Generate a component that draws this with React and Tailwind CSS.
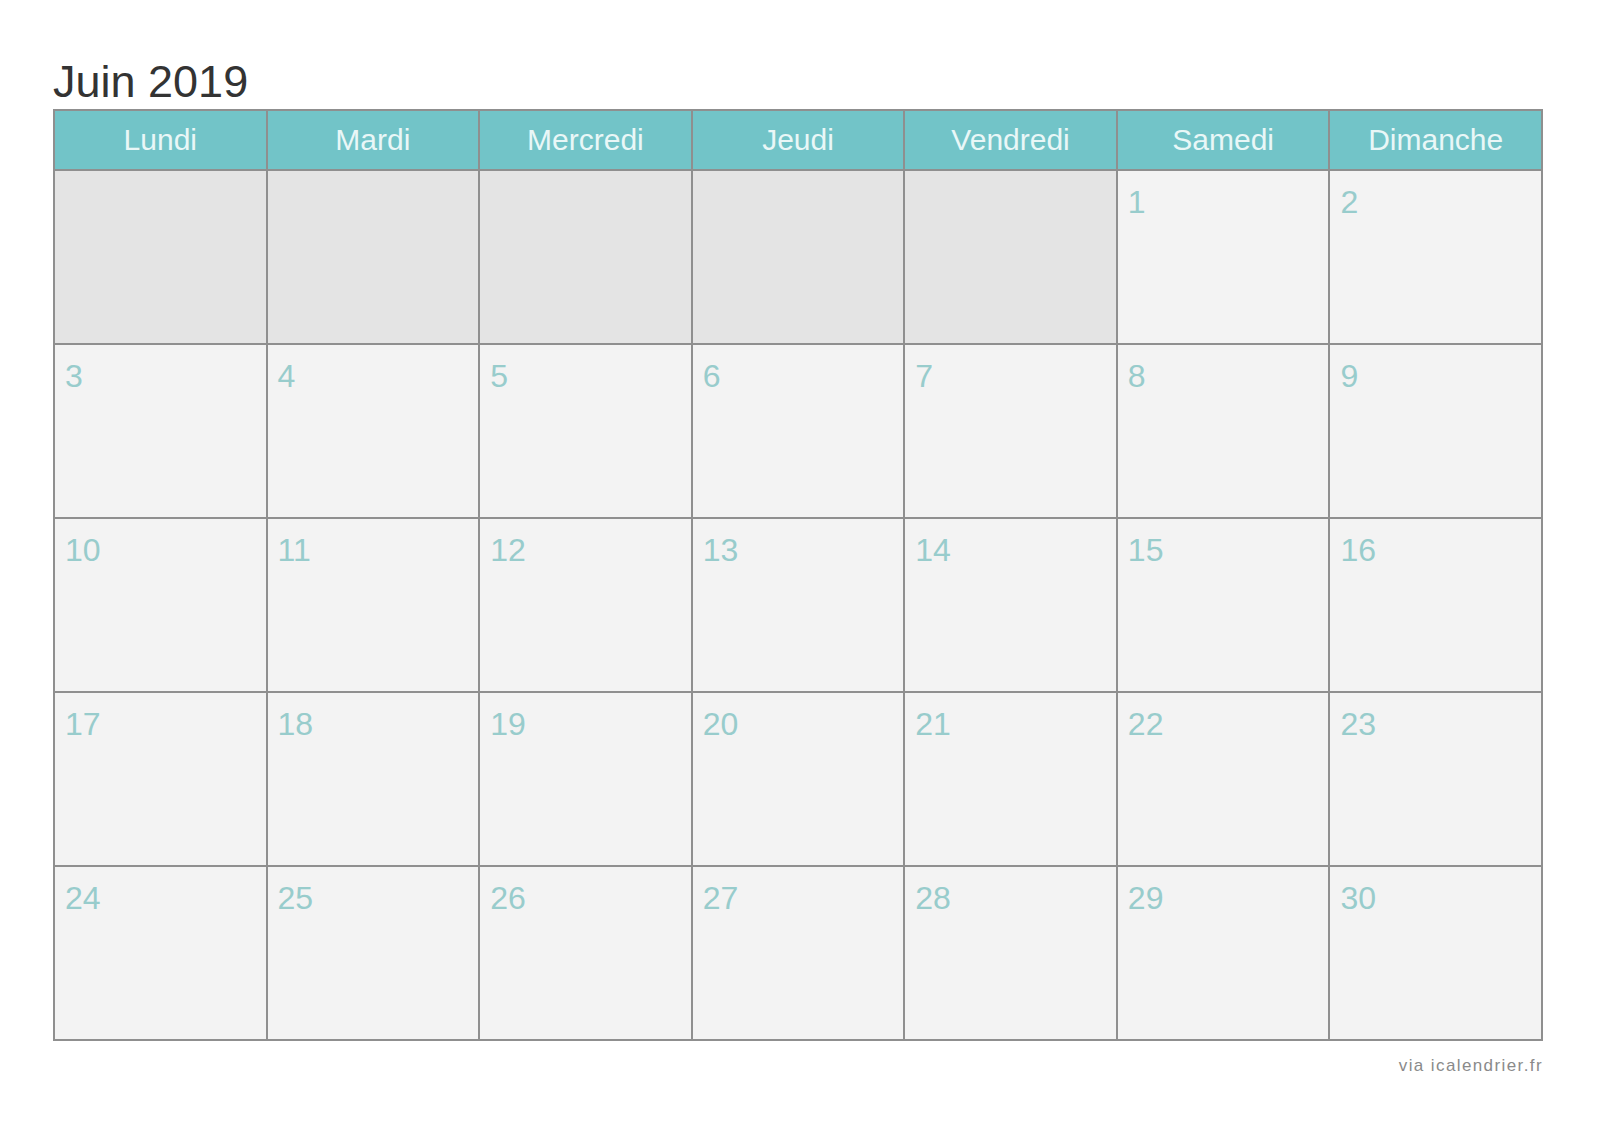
import React from 'react';

const days = ['Lundi', 'Mardi', 'Mercredi', 'Jeudi', 'Vendredi', 'Samedi', 'Dimanche'];

// June 2019 starts on a Saturday: five empty cells first
const cells = [...Array(5).fill(null), ...Array.from({ length: 30 }, (_, i) => i + 1)];

export default function App() {
    return (
        <div className="min-h-screen bg-white pl-[53px] pt-[59px]" style={{ fontFamily: '"Liberation Sans", Arial, sans-serif' }}>
            <div className="w-[1490px]">
                <h1 className="text-[45px] leading-none text-[#333333] mb-[5px]">Juin 2019</h1>

                <div className="grid grid-cols-7 gap-[2px] bg-[#8f8f8f] p-[2px]">
                    {days.map((d) => (
                        <div
                            key={d}
                            className="h-[58px] bg-[#72c4c8] flex items-center justify-center text-[30px] text-[#e9f7f7] pb-[2px]"
                        >
                            {d}
                        </div>
                    ))}
                    {cells.map((n, i) => (
                        <div
                            key={i}
                            className={`h-[172px] px-[10px] pt-[15px] text-[32px] leading-none text-[#98cccc] ${n ? 'bg-[#f3f3f3]' : 'bg-[#e4e4e4]'}`}
                        >
                            {n}
                        </div>
                    ))}
                </div>

                <div className="mt-[16px] text-right text-[17px] leading-none tracking-[1.4px] text-[#8a8a8a]">
                    via icalendrier.fr
                </div>
            </div>
        </div>
    );
}
